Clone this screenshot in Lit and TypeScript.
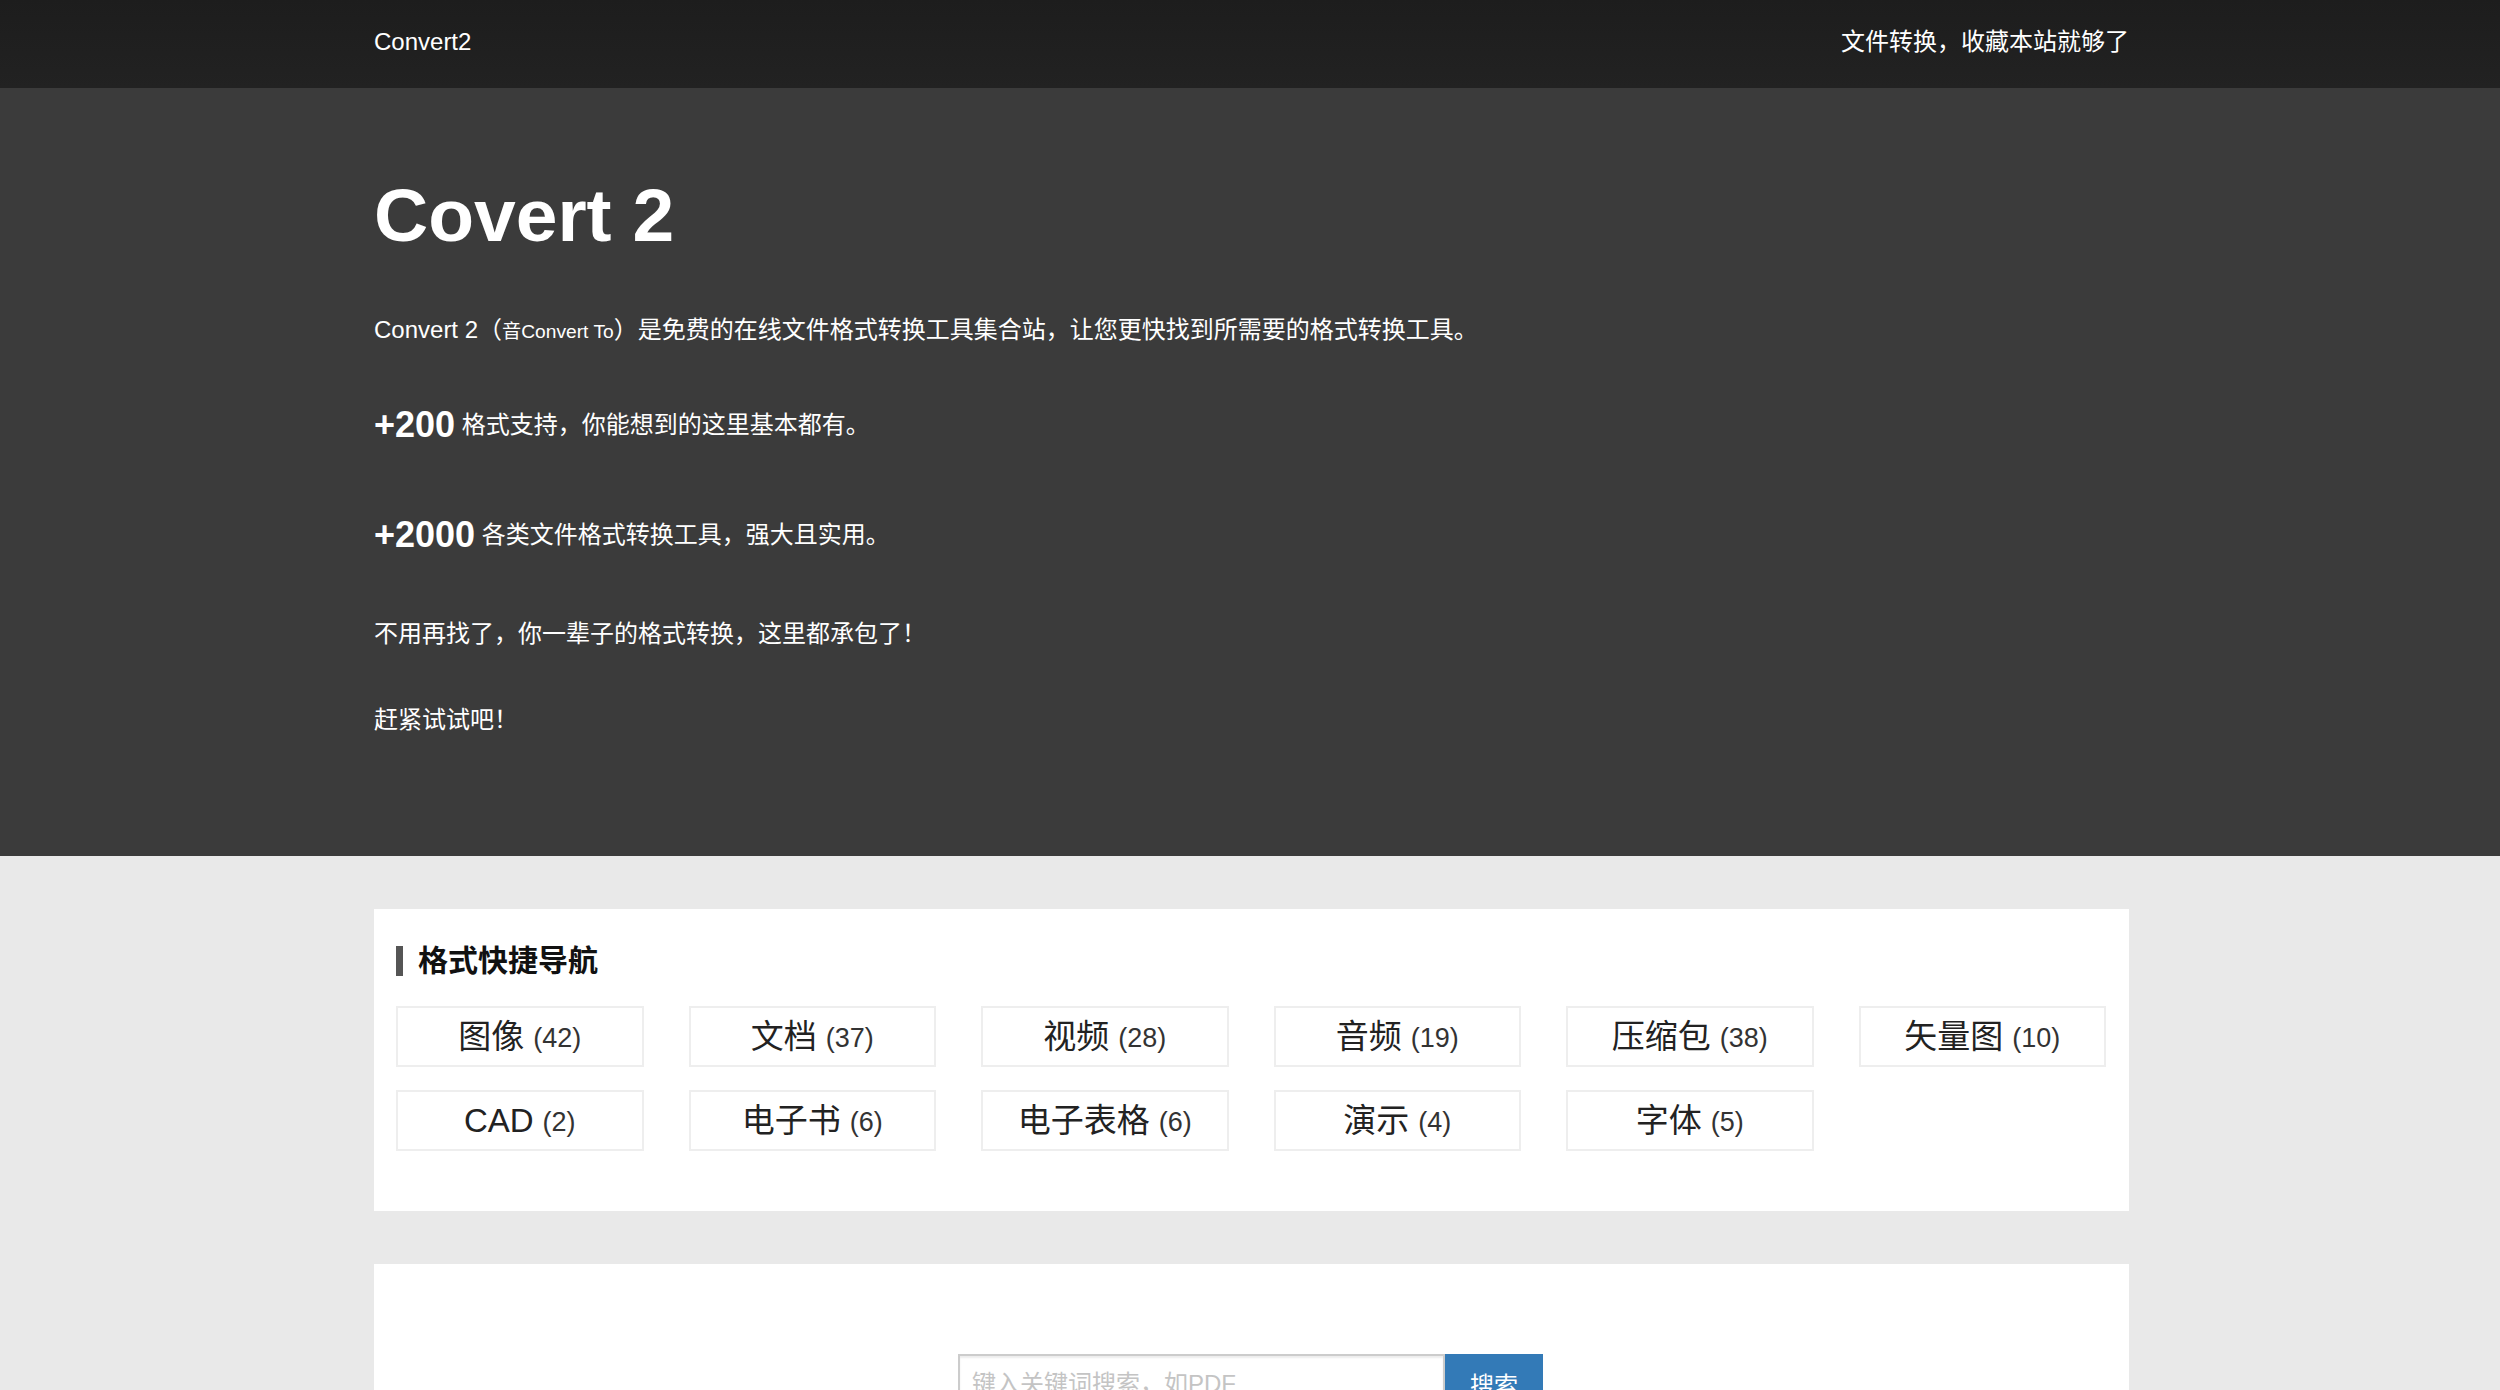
import { LitElement, css, html } from 'lit'
import { customElement } from 'lit/decorators.js'

const FORMATS: [string, number, boolean][] = [
  ['图像', 42, true], ['文档', 37, true], ['视频', 28, true], ['音频', 19, true], ['压缩包', 38, true], ['矢量图', 10, true],
  ['CAD', 2, false], ['电子书', 6, true], ['电子表格', 6, true], ['演示', 4, true], ['字体', 5, true],
]

@customElement('app-root')
export class AppRoot extends LitElement {
  static styles = css`
    :host {
      display: block;
      height: 1390px;
      overflow: hidden;
      background: #e9e9e9;
      font-family: "Liberation Sans", "Noto Sans CJK SC", sans-serif;
      font-size: 24px;
      color: #222;
    }
    .wrap {
      width: 1755px;
      margin-left: 374px;
    }
    .nav {
      height: 88px;
      background: linear-gradient(#1d1d1d, #222);
      color: #fff;
    }
    .nav .wrap {
      display: flex;
      justify-content: space-between;
      line-height: 84px;
    }
    .hero {
      height: 768px;
      background: #3b3b3b;
      color: #fff;
      box-sizing: border-box;
      padding-top: 86px;
    }
    h1 {
      margin: 0 0 57px;
      font-size: 75px;
      line-height: 82px;
      font-weight: 700;
    }
    .hero p {
      margin: 0 0 55px;
      line-height: 34px;
    }
    .hero p.stat {
      margin-bottom: 68px;
      line-height: 42px;
    }
    .hero p.stat + p.stat {
      margin-bottom: 65px;
    }
    .hero p.last {
      margin-top: -4px;
      margin-bottom: 52px;
    }
    .hero small {
      font-size: 19.2px;
    }
    .hero strong {
      font-size: 36px;
      vertical-align: -4px;
    }
    .card {
      background: #fff;
      margin-top: 53px;
    }
    .nav-card {
      height: 302px;
      box-sizing: border-box;
      padding: 37px 23px 0 22px;
    }
    h2 {
      margin: 0 0 30px;
      font-size: 30px;
      line-height: 30px;
      font-weight: 700;
      border-left: 7px solid #555;
      padding-left: 15px;
      color: #111;
    }
    .grid {
      display: grid;
      grid-template-columns: repeat(6, 1fr);
      column-gap: 45px;
      row-gap: 23px;
    }
    .item {
      height: 61px;
      box-sizing: border-box;
      border: 2px solid #eee;
      display: flex;
      align-items: center;
      justify-content: center;
      gap: 9px;
      font-size: 33px;
      color: #222;
    }
    .item .cjk {
      padding-bottom: 5px;
    }
    .item .count {
      font-size: 27px;
      color: #333;
      padding-top: 3px;
    }
    .search-card {
      height: 300px;
      padding-top: 90px;
      box-sizing: border-box;
    }
    .search {
      display: flex;
      justify-content: center;
      padding-right: 2px;
    }
    .search input {
      width: 487px;
      height: 59px;
      box-sizing: border-box;
      border: 2px solid #ccc;
      padding: 6px 12px;
      font: inherit;
      box-shadow: inset 0 2px 2px rgba(0, 0, 0, .075);
      outline: none;
    }
    .search input::placeholder {
      color: #c4c4c4;
    }
    .search button {
      width: 98px;
      height: 59px;
      border: 0;
      background: #337ab7;
      color: #fff;
      font: inherit;
    }
  `

  render() {
    return html`
      <div class="nav"><div class="wrap"><span>Convert2</span><span>文件转换，收藏本站就够了</span></div></div>
      <div class="hero">
        <div class="wrap">
          <h1>Covert 2</h1>
          <p>Convert 2（<small>音Convert To</small>）是免费的在线文件格式转换工具集合站，让您更快找到所需要的格式转换工具。</p>
          <p class="stat"><strong>+200</strong> 格式支持，你能想到的这里基本都有。</p>
          <p class="stat"><strong>+2000</strong> 各类文件格式转换工具，强大且实用。</p>
          <p class="last">不用再找了，你一辈子的格式转换，这里都承包了！</p>
          <p>赶紧试试吧！</p>
        </div>
      </div>
      <div class="wrap card nav-card">
        <h2>格式快捷导航</h2>
        <div class="grid">
          ${FORMATS.map(([name, n, cjk]) => html`<div class="item"><span class=${cjk ? 'cjk' : ''}>${name}</span><span class="count">(${n})</span></div>`)}
        </div>
      </div>
      <div class="wrap card search-card">
        <div class="search">
          <input placeholder="键入关键词搜索，如PDF" /><button>搜索</button>
        </div>
      </div>
    `
  }
}
